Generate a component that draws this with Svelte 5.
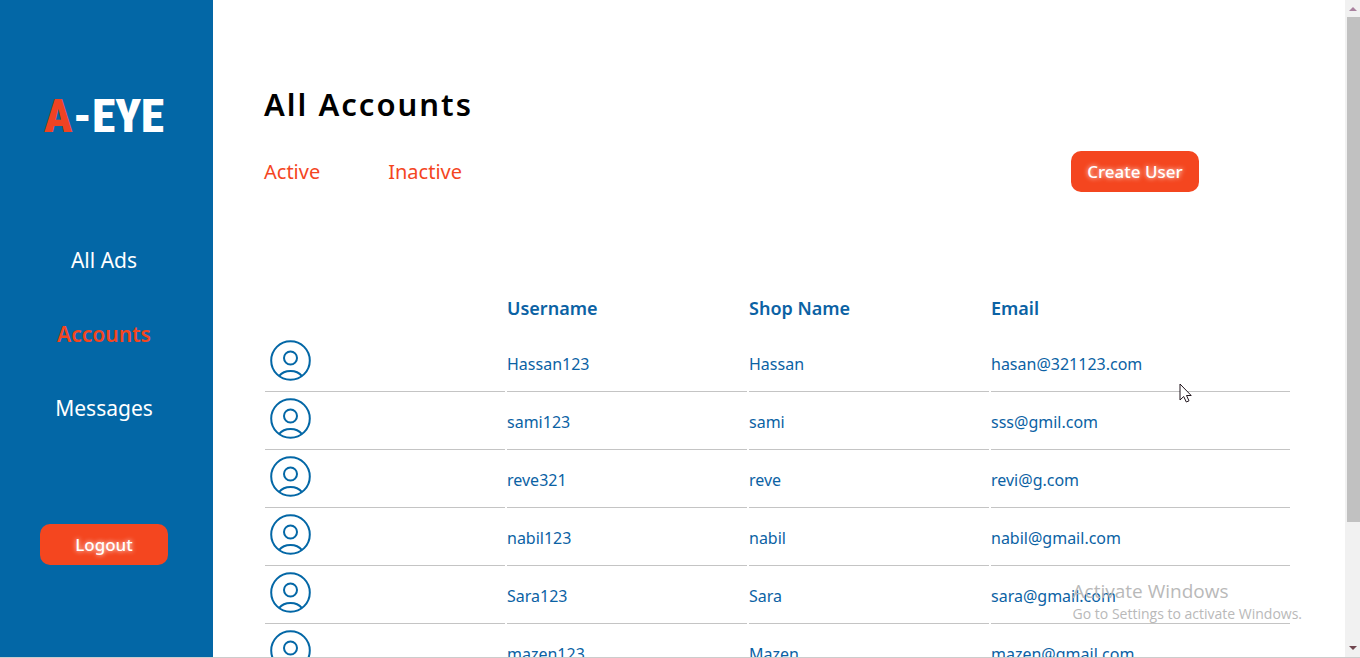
<script>
  const links = ['All Ads', 'Accounts', 'Messages'];
  const users = [
    ['Hassan123', 'Hassan', 'hasan@321123.com'],
    ['sami123', 'sami', 'sss@gmil.com'],
    ['reve321', 'reve', 'revi@g.com'],
    ['nabil123', 'nabil', 'nabil@gmail.com'],
    ['Sara123', 'Sara', 'sara@gmail.com'],
    ['mazen123', 'Mazen', 'mazen@gmail.com']
  ];
</script>

<div class="app">
  <aside>
    <div class="logo"><span>A</span>-EYE</div>
    <nav>
      {#each links as link}
        <a href="#top" class:current={link === 'Accounts'}>{link}</a>
      {/each}
    </nav>
    <button class="action">Logout</button>
  </aside>

  <main>
    <h1>All Accounts</h1>
    <div class="toolbar">
      <div class="tabs">
        <a href="#active">Active</a>
        <a href="#inactive">Inactive</a>
      </div>
      <button class="action">Create User</button>
    </div>
    <table>
      <thead>
        <tr><th></th><th>Username</th><th>Shop Name</th><th>Email</th></tr>
      </thead>
      <tbody>
        {#each users as [name, shop, email]}
          <tr>
            <td class="avatar">
              <svg viewBox="0 0 41 41" fill="none" stroke="#0367a6" stroke-width="2" aria-hidden="true">
                <circle cx="20.5" cy="20.5" r="19.3" />
                <circle cx="20.5" cy="18" r="6.5" />
                <path d="M9 36.1C14.5 29.3 26.5 29.3 32 36.1" />
              </svg>
            </td>
            <td>{name}</td>
            <td>{shop}</td>
            <td>{email}</td>
          </tr>
        {/each}
      </tbody>
    </table>
  </main>

  <div class="scrollbar" aria-hidden="true">
    <svg viewBox="0 0 15 17"><path d="M4 11H12L8 7Z" fill="#a9829f" /></svg>
    <div class="track"><div class="thumb"></div></div>
    <svg viewBox="0 0 15 17"><path d="M4 6H12L8 10Z" fill="#70464f" /></svg>
  </div>

  <div class="notice">
    <p class="lead">Activate Windows</p>
    <p>Go to Settings to activate Windows.</p>
  </div>
  <svg class="pointer" viewBox="0 0 13 20" aria-hidden="true">
    <path d="M1 1V17L4.7 13.5L7.3 19L10 17.8L7.5 12.5H12.2Z" fill="#fff" stroke="#20151d" />
  </svg>
</div>

<style>
  :global(body) {
    margin: 0;
    background: #fff;
  }
  .app {
    position: relative;
    display: grid;
    grid-template-columns: 213px 1fr 15px;
    height: 100vh;
    box-sizing: border-box;
    border-bottom: 1px solid #ccc;
    overflow: hidden;
    font-family: "Noto Sans", sans-serif;
  }
  aside {
    display: flex;
    flex-direction: column;
    align-items: center;
    box-sizing: border-box;
    padding: 86px 5px 0 0;
    background: #0367a6;
  }
  .logo {
    font: 900 47px/60px "Roboto Condensed", Roboto, sans-serif;
    color: #fff;
    white-space: nowrap;
  }
  .logo span {
    color: #ee4323;
  }
  nav {
    display: flex;
    flex-direction: column;
    align-items: center;
    gap: 42px;
    margin: 98px 0 100px;
  }
  nav a {
    font-size: 21px;
    line-height: 32px;
    color: #fff;
    text-decoration: none;
  }
  nav .current {
    color: #f4461f;
    font-weight: 600;
  }
  .action {
    width: 128px;
    height: 41px;
    padding: 0;
    border: 0;
    border-radius: 10px;
    background: #f4461f;
    color: #fff;
    font: 500 17px/24px "Noto Sans", sans-serif;
    text-shadow: 0 0 5px #fff;
  }
  main {
    min-width: 0;
    min-height: 0;
    padding: 79px 53px 0 50px;
    overflow: hidden;
  }
  h1 {
    margin: 0 0 22px 1px;
    font-size: 31px;
    line-height: 50px;
    font-weight: 600;
    letter-spacing: 2px;
    color: #000;
  }
  .toolbar {
    display: flex;
    justify-content: space-between;
    align-items: center;
    margin: 0 93px 88px 1px;
  }
  .tabs {
    display: flex;
    gap: 68px;
  }
  .tabs a {
    font-size: 20px;
    line-height: 32px;
    color: #f4461f;
    text-decoration: none;
  }
  table {
    width: 100%;
    table-layout: fixed;
    border-collapse: separate;
    border-spacing: 2px;
    color: #0b62a4;
  }
  th {
    width: 240px;
    height: 52px;
    padding: 0;
    text-align: left;
    font-size: 18px;
    font-weight: 600;
  }
  th:last-child {
    width: auto;
  }
  td {
    height: 55px;
    padding: 0;
    border-bottom: 1px solid #c4c4c4;
    font-size: 16px;
    line-height: 24px;
  }
  .avatar {
    padding-left: 5px;
  }
  .avatar svg {
    display: block;
    width: 41px;
    height: 41px;
    margin-bottom: 6px;
  }
  .scrollbar {
    display: flex;
    flex-direction: column;
    background: #f1f1f1;
  }
  .scrollbar svg {
    width: 15px;
    height: 17px;
  }
  .track {
    flex: 1;
    padding-left: 2px;
  }
  .thumb {
    height: 81%;
    background: #c1c1c1;
  }
  .notice {
    position: absolute;
    right: 58px;
    bottom: 33px;
    color: #b9b9b9;
    font: 14px/20px "Open Sans", sans-serif;
  }
  .notice p {
    margin: 0;
    white-space: nowrap;
  }
  .notice .lead {
    font-size: 19px;
    line-height: 26px;
  }
  .pointer {
    position: absolute;
    left: 1179px;
    top: 383px;
    width: 13px;
    height: 20px;
  }
</style>
